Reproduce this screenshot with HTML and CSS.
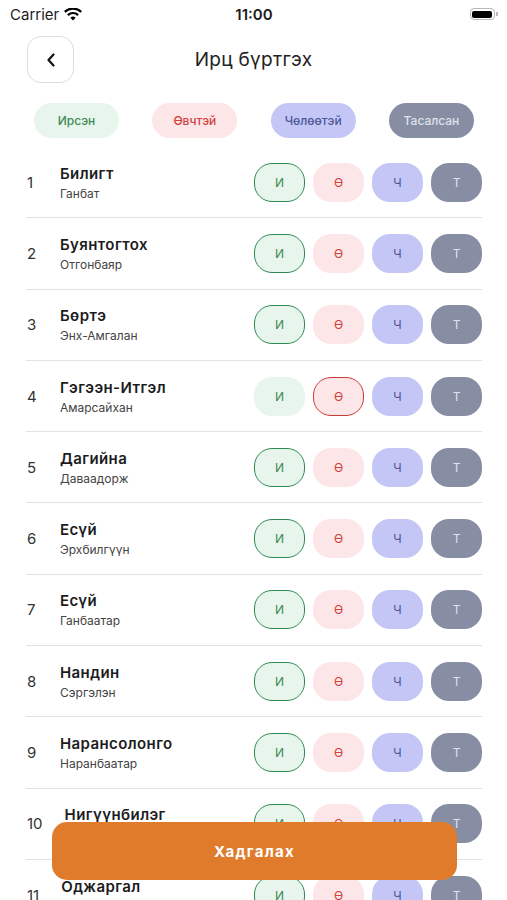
FILE: index.html
```html
<!DOCTYPE html>
<html lang="mn">

<head>
    <meta charset="UTF-8">
    <meta name="viewport" content="width=device-width, initial-scale=1.0">
    <title>Ирц бүртгэх</title>
    <link rel="stylesheet" href="styles.css">
</head>

<body>
    <div class="status-bar">
        <div class="carrier">
            Carrier
            <svg width="18" height="13" viewBox="0 0 18 13">
                <path d="M9 12.5l2.6-2.8a3.7 3.7 0 0 0-5.2 0z" fill="#000" />
                <path d="M4.6 7.9a6.3 6.3 0 0 1 8.8 0l1.5-1.6a8.5 8.5 0 0 0-11.8 0z" fill="#000" />
                <path d="M1.5 4.7a10.7 10.7 0 0 1 15 0L18 3.1a12.9 12.9 0 0 0-18 0z" fill="#000" />
            </svg>
        </div>
        <div class="clock">11:00</div>
        <div class="battery">
            <span class="battery-body"><span class="battery-level"></span></span>
            <span class="battery-cap"></span>
        </div>
    </div>

    <header class="header">
        <button class="back-btn" type="button">
            <svg width="10" height="14" viewBox="0 0 10 14">
                <path d="M7.5 1.5L2.5 7l5 5.5" fill="none" stroke="#111" stroke-width="2.2" stroke-linecap="round" stroke-linejoin="round" />
            </svg>
        </button>
        <h1 class="title">Ирц бүртгэх</h1>
    </header>

    <div class="legend">
        <span class="pill pill-present">Ирсэн</span>
        <span class="pill pill-sick">Өвчтэй</span>
        <span class="pill pill-leave">Чөлөөтэй</span>
        <span class="pill pill-absent">Тасалсан</span>
    </div>

    <ul class="student-list" id="student-list"></ul>

    <button class="save-btn" type="button">Хадгалах</button>

    <script>
        // Student roster with current attendance mark
        const students = [
            { name: 'Билигт', parent: 'Ганбат', mark: 'p' },
            { name: 'Буянтогтох', parent: 'Отгонбаяр', mark: 'p' },
            { name: 'Бөртэ', parent: 'Энх-Амгалан', mark: 'p' },
            { name: 'Гэгээн-Итгэл', parent: 'Амарсайхан', mark: 's' },
            { name: 'Дагийна', parent: 'Даваадорж', mark: 'p' },
            { name: 'Есүй', parent: 'Эрхбилгүүн', mark: 'p' },
            { name: 'Есүй', parent: 'Ганбаатар', mark: 'p' },
            { name: 'Нандин', parent: 'Сэргэлэн', mark: 'p' },
            { name: 'Нарансолонго', parent: 'Наранбаатар', mark: 'p' },
            { name: 'Нигүүнбилэг', parent: 'Батбаяр', mark: 'p' },
            { name: 'Оджаргал', parent: 'Төмөрбаатар', mark: 'p' }
        ];

        const marks = [
            { key: 'p', label: 'И', cls: 'mark-present' },
            { key: 's', label: 'Ө', cls: 'mark-sick' },
            { key: 'l', label: 'Ч', cls: 'mark-leave' },
            { key: 'a', label: 'Т', cls: 'mark-absent' }
        ];

        const list = document.getElementById('student-list');

        list.innerHTML = students.map((s, i) => `
            <li class="student-row">
                <span class="num">${i + 1}</span>
                <div class="names">
                    <span class="name">${s.name}</span>
                    <span class="parent">${s.parent}</span>
                </div>
                <div class="marks">
                    ${marks.map(m => `<button class="mark ${m.cls} ${s.mark === m.key ? 'selected' : ''}">${m.label}</button>`).join('')}
                </div>
            </li>
        `).join('');

        // Toggle a mark on click
        list.addEventListener('click', function (e) {
            const btn = e.target.closest('.mark');
            if (!btn) return;
            btn.parentElement.querySelectorAll('.mark').forEach(b => b.classList.remove('selected'));
            btn.classList.add('selected');
        });
    </script>
</body>

</html>
```

FILE: styles.css
```css
* {
    margin: 0;
    padding: 0;
    box-sizing: border-box;
}

body {
    font-family: Inter, "Noto Sans", Roboto, sans-serif;
    background: #ffffff;
    color: #1c1c1e;
    height: 100vh;
    overflow: hidden;
}

button {
    font-family: inherit;
    cursor: pointer;
}

/* Status bar */
.status-bar {
    height: 28px;
    display: flex;
    align-items: center;
    justify-content: space-between;
    padding: 0 9px 0 10px;
}

.carrier {
    display: flex;
    align-items: center;
    gap: 5px;
    font-size: 15px;
    width: 120px;
}

.clock {
    font-size: 15px;
    font-weight: 600;
}

.battery {
    width: 120px;
    display: flex;
    justify-content: flex-end;
    align-items: center;
}

.battery-body {
    width: 25px;
    height: 12px;
    border: 1px solid #b8b8b8;
    border-radius: 4px;
    padding: 1.5px;
    display: flex;
}

.battery-level {
    flex: 1;
    background: #000;
    border-radius: 2px;
}

.battery-cap {
    width: 2px;
    height: 4px;
    background: #b8b8b8;
    border-radius: 0 1px 1px 0;
    margin-left: 1px;
}

/* Header */
.header {
    display: flex;
    align-items: center;
    padding: 8px 27px 0;
    height: 55px;
}

.back-btn {
    width: 47px;
    height: 47px;
    border: 1px solid #dddddd;
    border-radius: 14px;
    background: #fff;
    display: flex;
    align-items: center;
    justify-content: center;
}

.title {
    flex: 1;
    text-align: center;
    font-size: 19px;
    font-weight: 400;
    letter-spacing: 0.3px;
    color: #222;
    margin-right: 47px;
}

/* Legend */
.legend {
    display: flex;
    justify-content: space-between;
    padding: 20px 33px 0 34px;
}

.pill {
    width: 85px;
    height: 35px;
    border-radius: 18px;
    display: flex;
    align-items: center;
    justify-content: center;
    font-size: 12px;
    font-weight: 500;
}

.pill-present {
    background: #e8f5ec;
    color: #3d8a57;
}

.pill-sick {
    background: #fde6e7;
    color: #d0413f;
}

.pill-leave {
    background: #c4c7f6;
    color: #4d5896;
}

.pill-absent {
    background: #878ea4;
    color: #dfe2ea;
}

/* Student list */
.student-list {
    list-style: none;
    padding: 9px 25px 0 26px;
}

.student-row {
    display: flex;
    align-items: center;
    height: 71.3px;
    border-bottom: 1.5px solid #e2e2e2;
}

.num {
    font-size: 15px;
    color: #333;
    padding-left: 1px;
    margin-right: 22px;
    min-width: 12px;
}

.names {
    flex: 1;
    display: flex;
    flex-direction: column;
    gap: 3px;
    min-width: 0;
}

.name {
    font-size: 15px;
    font-weight: 600;
    color: #1c1c1e;
    letter-spacing: 0.4px;
}

.parent {
    font-size: 12px;
    color: #444;
}

.marks {
    display: flex;
    gap: 8px;
}

.mark {
    width: 51px;
    height: 39px;
    border-radius: 18px;
    border: 1.8px solid transparent;
    font-size: 12px;
    display: flex;
    align-items: center;
    justify-content: center;
}

.mark-present {
    background: #e8f5ec;
    color: #3d8a57;
}

.mark-present.selected {
    border-color: #2f8a52;
}

.mark-sick {
    background: #fde6e7;
    color: #d0413f;
}

.mark-sick.selected {
    border-color: #cc3b38;
}

.mark-leave {
    background: #c4c7f6;
    color: #4d5896;
}

.mark-absent {
    background: #878ea4;
    color: #dfe2ea;
}

/* Save button floats over the list */
.save-btn {
    position: fixed;
    left: 52px;
    right: 50px;
    bottom: 20px;
    height: 58px;
    border: none;
    border-radius: 15px;
    background: #e07b2b;
    color: #fff;
    font-size: 15px;
    font-weight: 700;
    letter-spacing: 1.3px;
}
```
